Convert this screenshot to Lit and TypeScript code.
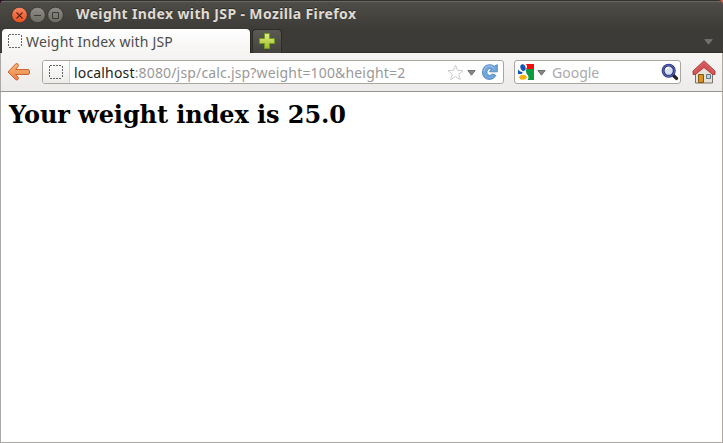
import { LitElement, html, css, svg } from "lit";
import { customElement } from "lit/decorators.js";

@customElement("app-root")
export class AppRoot extends LitElement {
  static styles = css`
    :host { display: block; width: 723px; height: 443px; overflow: hidden; background: #3c3b37; }
    * { box-sizing: border-box; }
    svg { display: block; flex: none; }
    .window { height: 443px; display: flex; flex-direction: column; position: relative;
      font-family: "Noto Sans", "Open Sans", sans-serif; }
    .corner { position: absolute; top: 0; }
    .corner.left { left: 0; }
    .corner.right { right: 0; }
    .chrome { height: 53px; flex: none; background: linear-gradient(#55534c 0, #4d4b45 3px, #3c3b37 29px);
      border-top: 1px solid #33322e; border-bottom: 1px solid #32302c; box-shadow: inset 0 1px #686660; }
    .title { height: 28px; display: flex; align-items: center; padding-left: 11px; gap: 1px; }
    .title h1 { margin: -3px 0 0 11px; font-size: 14px; line-height: 20px; font-weight: 700;
      color: #dfdbd2; white-space: nowrap; letter-spacing: .37px; text-shadow: 0 -1px #2d2c28; }
    .tabs { height: 24px; display: flex; align-items: flex-start; padding: 0 9px 0 2px; }
    .tab { width: 248px; height: 24px; background: linear-gradient(#fff, #f5f4f2); border-radius: 4px 4px 0 0;
      display: flex; align-items: center; padding-left: 6px; gap: 4px; font-size: 14px; color: #4c4c4c;
      line-height: 22px; white-space: nowrap; box-shadow: 1px 0 #292824; }
    .tab span { letter-spacing: .2px; padding-top: 2px; }
    .plus { width: 30px; height: 24px; margin-left: 2px; background: linear-gradient(#5a5953, #43423d);
      border: 1px solid #2d2c28; border-bottom: 0; border-radius: 4px 4px 0 0; display: flex; padding: 3px 0 0 6px; }
    .spacer { flex: 1; }
    .list { margin-top: 10px; margin-right: 1px; }
    .toolbar { height: 39px; flex: none; display: flex; align-items: center; background: linear-gradient(#f6f5f3, #edebe9);
      border-bottom: 1px solid #979591; border-left: 1px solid #aca8a4; border-right: 1px solid #aca8a4; padding: 0 6px 0 6px; }
    .field { height: 24px; border: 1px solid #aaa69f; border-radius: 3px; background: #fff; display: flex; align-items: center;
      font-size: 14px; line-height: 22px; white-space: nowrap; color: #999; }
    .url { width: 462px; margin-left: 12px; padding-right: 5px; }
    .identity { width: 27px; height: 22px; border-right: 1px solid #d2d0cd; background: linear-gradient(#fff, #ececea);
      border-radius: 2px 0 0 2px; display: flex; align-items: center; padding-left: 6px; }
    .address { flex: 1; padding: 2px 0 0 4px; letter-spacing: .165px; }
    .address b { font-weight: 400; color: #222; }
    .search { width: 167px; margin-left: 10px; padding: 0 1px 0 3px; }
    .search span { flex: 1; padding: 2px 0 0 6px; color: #aaa; }
    .home { margin-left: 11px; }
    .down { margin: 2px 0 0 3px; }
    .reload { margin-left: 6px; }
    .page { flex: 1; background: #fff; border: 1px solid #aca8a6; border-top: 0; padding: 9px 8px 8px; }
    .page h2 { margin: 0; font: 700 24px/28px "DejaVu Serif", serif; letter-spacing: -.08px; color: #000; white-space: nowrap; }
  `;

  private button(kind: "close" | "min" | "max") {
    const close = kind === "close";
    const stroke = close ? "#5a2513" : "#3b3a35";
    return html`<svg width="17" height="18" viewBox="0 0 17 18">
      <defs><linearGradient id=${"face-" + kind} x2="0" y2="1">
        <stop stop-color=${close ? "#f98760" : "#908e86"} /><stop offset="1" stop-color=${close ? "#e8501f" : "#6b6a63"} />
      </linearGradient></defs>
      <circle cx="8.5" cy="9" r="7.8" fill=${`url(#face-${kind})`} stroke="#34332f" stroke-width=".8" />
      ${close
        ? svg`<path d="M5.500 6.500l6 6m0-6l-6 6" stroke=${stroke} stroke-width="1.100" />`
        : kind === "min"
          ? svg`<path d="M5 9.500h7" stroke=${stroke} />`
          : svg`<path d="M5.500 6.500h6v6h-6z" fill="none" stroke=${stroke} />`}
    </svg>`;
  }

  private blank() {
    return html`<svg width="14" height="14" viewBox="0 0 14 14">
      <path d="M1 .5h12M1 13.500h12M.5 1v12M13.500 1v12" stroke="#636363" stroke-dasharray="2 1 2 1" shape-rendering="crispEdges" />
    </svg>`;
  }

  private down() {
    return html`<svg class="down" width="9" height="6" viewBox="0 0 9 6"><path d="M.8.5h7.400L4.500 5.200z" fill="#858585" stroke="#686868" stroke-width=".9" /></svg>`;
  }

  render() {
    return html`<div class="window">
      <div class="chrome">
        <div class="title">
          ${this.button("close")}${this.button("min")}${this.button("max")}
          <h1>Weight Index with JSP - Mozilla Firefox</h1>
        </div>
        <div class="tabs">
          <div class="tab">${this.blank()}<span>Weight Index with JSP</span></div>
          <div class="plus"><svg width="16" height="16" viewBox="0 0 16 16">
            <defs><linearGradient id="p" x2="0" y2="1"><stop stop-color="#e3ed85" /><stop offset="1" stop-color="#9dbd25" /></linearGradient></defs>
            <path d="M5.500.5h5v5h5v5h-5v5h-5v-5h-5v-5h5z" fill="url(#p)" stroke="#719b20" />
          </svg></div>
          <div class="spacer"></div>
          <svg class="list" width="9" height="6" viewBox="0 0 9 6"><path d="M.7.5h7.600L4.500 5.300z" fill="#73716c" stroke="#8a8882" stroke-width=".5" /></svg>
        </div>
      </div>
      <div class="toolbar">
        <svg width="23" height="20" viewBox="0 0 23 20">
          <defs><linearGradient id="a" x2="0" y2="1"><stop stop-color="#f6b97a" /><stop offset="1" stop-color="#e88243" /></linearGradient></defs>
          <path d="M1 10L8.500 2q1.500-1 2.500.2 1 1.300-.2 2.600L8.500 7.500H21q1.500 0 1.500 2.500t-1.500 2.500H8.500L11 15.200q1 1.300 0 2.300t-2.500 0z" fill="url(#a)" stroke="#cf6030" stroke-linejoin="round" />
        </svg>
        <div class="field url">
          <div class="identity">${this.blank()}</div>
          <div class="address"><b>localhost</b>:8080/jsp/calc.jsp?weight=100&amp;height=2</div>
          <svg width="17" height="17" viewBox="0 0 17 17"><path d="M8.500 1.200l2 5.100 5.500.4-4.300 3.400 1.600 5.500-4.800-3-4.800 3 1.600-5.500L1 6.700l5.500-.4z" fill="#fff" stroke="#cdcdcd" stroke-linejoin="round" /></svg>
          ${this.down()}
          <svg class="reload" width="16" height="16" viewBox="0 0 16 16">
            <path d="M14 11.500Q11.500 15.500 7.500 15.500 .5 15 .5 8 1 1 7.500.7q3 0 4.700 1.600L15.300.7V7.800H7.500L9.500 5q-4-1.500-4.700 3 .5 4 4 3.200L10.500 10z" fill="#74a8dc" stroke="#4b82bd" stroke-width=".9" stroke-linejoin="round" />
            <path d="M2 7.500Q2.500 2.200 7.500 2q2.500 0 4.500 2" fill="none" stroke="#a3c8eb" stroke-width=".9" />
          </svg>
        </div>
        <div class="field search">
          <svg width="16" height="16" viewBox="0 0 16 16">
            <path d="M8 0h8v5H8q2-2 0-5z" fill="#f50c0c" />
            <path d="M8.500 5H16v11H9.500q2.500-3-1-6.500-1.500-2 0-4.500z" fill="#0c9a42" />
            <path d="M0 5.500q2 2.500 4.500 2.500L4 10H0z" fill="#1257b5" />
            <ellipse cx="5" cy="3.700" rx="2.600" ry="3.500" transform="rotate(-15 5 3.700)" fill="#1257b5" />
            <ellipse cx="5" cy="13.300" rx="3.700" ry="2.500" fill="#f5b00e" />
          </svg>
          ${this.down()}
          <span>Google</span>
          <svg width="18" height="18" viewBox="0 0 18 18">
            <path d="M12.500 12.500l3 2.900" stroke="#222" stroke-width="3.400" stroke-linecap="round" />
            <circle cx="7.700" cy="7.700" r="5.600" fill="#d7e0ef" stroke="#26317a" stroke-width="2.900" />
            <circle cx="7.700" cy="7.700" r="5.700" fill="none" stroke="#6278bf" />
            <path d="M5 7q0-2.500 3-2.500" fill="none" stroke="#fff" stroke-width="1.500" />
          </svg>
        </div>
        <svg class="home" width="24" height="24" viewBox="0 0 24 24">
          <path d="M3.500 11L12 4l8.500 7v12h-17z" fill="#e6e2d9" stroke="#77736c" />
          <path d="M6.500 22.500v-8h5v8z" fill="#d9941f" stroke="#895610" />
          <path d="M14.500 14.500h4v4h-4z" fill="#bdd1df" stroke="#657985" />
          <path d="M12 .8L1 11v3.500h2.300L12 7.500l8.700 7H23V11z" fill="#d35254" stroke="#a8383c" stroke-width=".9" stroke-linejoin="round" />
          <path d="M2 11.500L12 2.500l10 9" fill="none" stroke="#dd7070" stroke-width=".8" />
        </svg>
      </div>
      <div class="page"><h2>Your weight index is 25.0</h2></div>
      <svg class="corner left" width="5" height="5"><path d="M0 0h5Q0 0 0 5z" fill="#300a24" /></svg>
      <svg class="corner right" width="5" height="5"><path d="M5 0H0Q5 0 5 5z" fill="#df5b43" /></svg>
    </div>`;
  }
}
